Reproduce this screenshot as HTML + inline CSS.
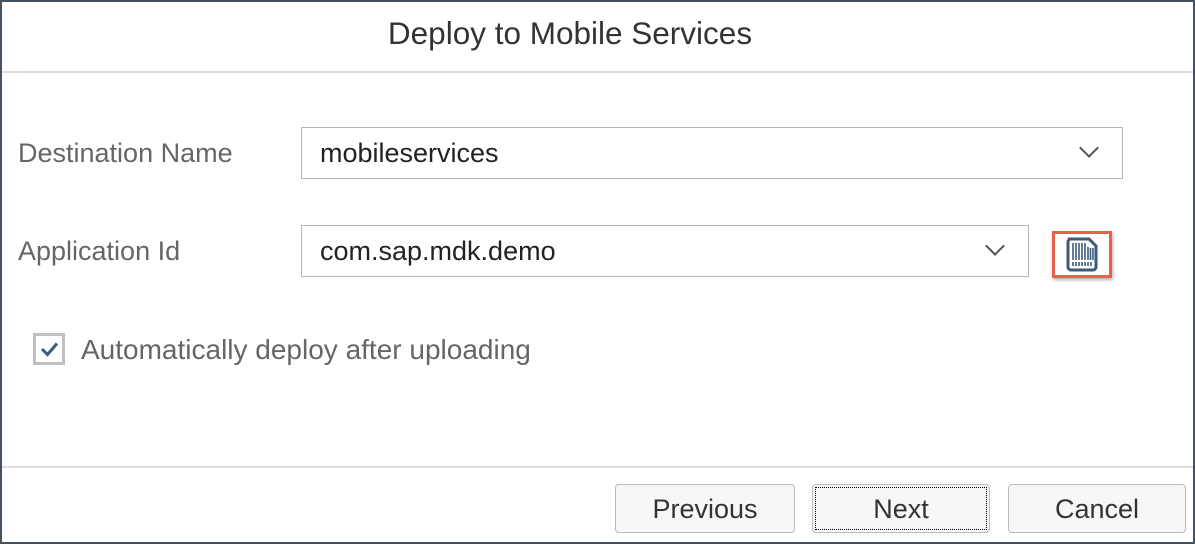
<!DOCTYPE html>
<html><head><style>
body{margin:0;width:1195px;height:544px;overflow:hidden;background:#fff;font-family:"Liberation Sans",sans-serif}
.frame{position:absolute;left:0;top:0;width:1195px;height:544px;box-sizing:border-box;border:2px solid #44535f}
.abs{position:absolute}
.title{left:0;width:1140px;top:15px;text-align:center;font-size:31.5px;color:#333}
.hr{left:2px;right:2px;height:2px;background:#ddd}
.lbl{font-size:27px;color:#666}
.inp{border:1px solid #b5b5b5;background:#fff;box-sizing:border-box;font-size:27px;color:#222;padding-left:18px;line-height:51px}
.chev{position:absolute;width:12px;height:12px;border-right:2px solid #555;border-bottom:2px solid #555;transform:rotate(45deg)}
.btn{border:1px solid #bbb;border-radius:4px;background:#f7f7f7;box-sizing:border-box;font-size:27px;color:#333;text-align:center;line-height:48px}
</style></head><body>
<div class="frame"></div>
<div class="abs title">Deploy to Mobile Services</div>
<div class="abs hr" style="top:71px"></div>
<div class="abs lbl" style="left:18px;top:138px">Destination Name</div>
<div class="abs inp" style="left:301px;top:127px;width:822px;height:52px">mobileservices<div class="chev" style="left:780px;top:13px"></div></div>
<div class="abs lbl" style="left:18px;top:236px">Application Id</div>
<div class="abs inp" style="left:301px;top:225px;width:728px;height:52px">com.sap.mdk.demo<div class="chev" style="left:686px;top:13px"></div></div>
<div class="abs" style="left:1052px;top:231px;width:60px;height:47px;box-sizing:border-box;border:3px solid #e8604c;box-shadow:1px 2px 3px rgba(0,0,0,.3);background:#fff">
<svg width="54" height="41" viewBox="0 0 54 41" style="position:absolute;left:0;top:0">
<path d="M13 5h21l7 7v21a3 3 0 0 1-3 3H16a3 3 0 0 1-3-3V8a3 3 0 0 1 3-3z" fill="none" stroke="#3d5a78" stroke-width="3"/>
<g stroke="#3d5a78" stroke-width="1.6"><path d="M18 9v17M21 9v17M24 9v17M27 9v17M30 9v17M33 13v13M35.5 14v12M38 14v12"/><path d="M18 28v4M21 28v4M24 28v4M27 28v4M30 28v4M33 28v4M36 28v4"/></g>
</svg></div>
<div class="abs" style="left:33px;top:333px;width:32px;height:32px;box-sizing:border-box;border:3px solid #c0c0c0"></div>
<svg class="abs" style="left:33px;top:333px" width="32" height="32"><path d="M9 16l5.5 5.5 9.5-11" fill="none" stroke="#3d5a78" stroke-width="3"/></svg>
<div class="abs lbl" style="left:81px;top:334px;font-size:28px">Automatically deploy after uploading</div>
<div class="abs hr" style="top:466px"></div>
<div class="abs btn" style="left:615px;top:484px;width:180px;height:49px">Previous</div>
<div class="abs btn" style="left:812px;top:484px;width:178px;height:49px"><div style="position:absolute;left:2px;top:2px;right:2px;bottom:2px;border:1px dotted #000"></div>Next</div>
<div class="abs btn" style="left:1008px;top:484px;width:178px;height:49px">Cancel</div>
</body></html>
